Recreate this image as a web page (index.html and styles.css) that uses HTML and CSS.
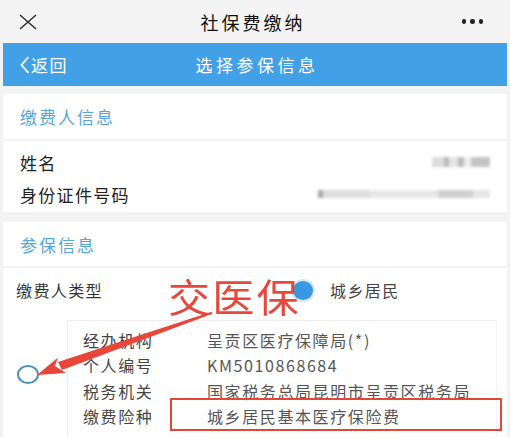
FILE: index.html
```html
<!DOCTYPE html>
<html lang="zh-CN">
<head>
<meta charset="utf-8">
<title>社保费缴纳</title>
<link rel="stylesheet" href="styles.css">
</head>
<body>
<div class="page">
  <header class="topbar">
    <svg class="icon-close" width="18" height="16" viewBox="0 0 18 16"><path d="M1 1 L17 15 M17 1 L1 15" stroke="#333" stroke-width="1.6" fill="none"/></svg>
    <div class="topbar-title">社保费缴纳</div>
    <div class="dots"><i></i><i></i><i></i></div>
  </header>

  <nav class="navbar">
    <div class="back"><svg width="10" height="18" viewBox="0 0 10 18"><path d="M8.5 1 L1.5 9 L8.5 17" stroke="#fff" stroke-width="1.8" fill="none"/></svg><span>返回</span></div>
    <div class="nav-title">选择参保信息</div>
    <div></div>
  </nav>

  <section class="sec-head">缴费人信息</section>
  <section class="card rows">
    <div class="row"><span>姓名</span><span class="blur blur-name"></span></div>
    <div class="row"><span>身份证件号码</span><span class="blur blur-id"></span></div>
  </section>

  <section class="sec-head sec-gap">参保信息</section>
  <section class="card detail">
    <div class="type-row">
      <span class="type-label">缴费人类型</span>
      <span class="radio-on"></span>
      <span class="type-val">城乡居民</span>
    </div>
    <div class="choice">
      <span class="radio-off"></span>
      <div class="infobox">
        <span class="k">经办机构</span><span class="v">呈贡区医疗保障局(*)</span>
        <span class="k">个人编号</span><span class="v">KM5010868684</span>
        <span class="k">税务机关</span><span class="v">国家税务总局昆明市呈贡区税务局</span>
        <span class="k">缴费险种</span><span class="v">城乡居民基本医疗保险费</span>
      </div>
    </div>
  </section>

  <div class="note">交医保</div>
  <div class="redbox"></div>
  <svg class="arrow" width="510" height="437" viewBox="0 0 510 437">
    <polygon points="212.4,313.8 211.6,311.8 58,362 62,370" fill="#e8463a"/>
    <polygon points="37,375 58,357.5 55,366 66,373" fill="#e8463a"/>
  </svg>
</div>
</body>
</html>
```

FILE: styles.css
```css
* { box-sizing: border-box; }
html, body { margin: 0; padding: 0; }
body {
  font-family: "Noto Sans CJK SC", "Noto Sans", sans-serif;
  background: #f3f3f3;
  width: 510px;
  height: 437px;
  overflow: hidden;
}
.page {
  position: relative;
  width: 510px;
  height: 437px;
  padding: 0 3px;
  overflow: hidden;
}
.topbar {
  height: 43px;
  display: grid;
  grid-template-columns: 1fr auto 1fr;
  align-items: center;
  padding: 0 24px 0 16px;
  background: #f4f4f4;
}
.icon-close { display: block; }
.topbar-title {
  font-size: 18px;
  font-weight: 400;
  letter-spacing: 3px;
  color: #111;
  margin-left: 4px;
}
.dots { display: flex; justify-content: flex-end; gap: 4px; }
.dots i { width: 4.5px; height: 4.5px; border-radius: 50%; background: #222; display: block; }

.navbar {
  height: 43px;
  background: #42a0e6;
  display: grid;
  grid-template-columns: 1fr auto 1fr;
  align-items: center;
  padding: 0 17px;
  color: #fff;
}
.back { display: flex; align-items: center; gap: 1px; font-size: 17px; letter-spacing: 1.5px; }
.back svg { display: block; }
.nav-title { font-size: 17px; letter-spacing: 3.5px; margin-left: 4px; }

.sec-head {
  margin-top: 8px;
  height: 45px;
  background: #fff;
  display: flex;
  align-items: center;
  padding-left: 17px;
  font-size: 17px;
  letter-spacing: 2px;
  color: #55a6dc;
  margin-bottom: 2px;
}
.sec-gap { margin-top: 10px; height: 44px; }
.card { background: #fff; }
.rows { padding: 5px 17px 2px 17px; }
.row {
  height: 32px;
  display: flex;
  justify-content: space-between;
  align-items: center;
  font-size: 17px;
  letter-spacing: 1.3px;
  color: #222;
}
.blur { display: block; filter: blur(1.8px); }
.blur-name {
  width: 58px; height: 10px;
  background: linear-gradient(90deg, #ddd 0 20%, #bbb 20% 30%, #e4e4e4 30% 45%, #bbb 45% 55%, #eee 55% 68%, #c4c4c4 68% 100%);
}
.blur-id {
  width: 172px; height: 8px;
  background: linear-gradient(90deg, #aaa 0 3%, #ddd 3% 30%, #e8e8e8 30% 70%, #cfcfcf 70% 90%, #e6e6e6 90% 100%);
}

.detail { height: 200px; padding: 10px 10px 0 13px; }
.type-row {
  height: 24px;
  display: flex;
  align-items: center;
  font-size: 16px;
  letter-spacing: 1.4px;
  color: #333;
}
.type-label { width: 277px; }
.radio-on {
  width: 20px; height: 19px;
  border-radius: 50%;
  background: #3a97e2;
  box-shadow: 0 0 0 2px #d6e7f6;
}
.type-val { margin-left: 17px; color: #444; }

.choice {
  margin-top: 18px;
  display: flex;
  align-items: center;
  padding-left: 1px;
}
.radio-off {
  width: 22px; height: 19px;
  border: 2px solid #4f91bb;
  border-radius: 50%;
  margin-top: -22px;
}
.infobox {
  margin-left: 28px;
  width: 430px;
  border: 1px solid #ececec;
  border-right-color: #f3f3f3;
  padding: 6px 0 20px 15px;
  display: grid;
  grid-template-columns: 124px 1fr;
  grid-auto-rows: 25.5px;
  align-items: center;
  font-size: 16px;
  letter-spacing: 1.6px;
}
.k { color: #444; }
.v { color: #555; }

.note {
  position: absolute;
  left: 168px;
  top: 269px;
  font-size: 39px;
  line-height: 52px;
  color: #e6483b;
  letter-spacing: 2px;
  transform: scaleX(1.08);
  transform-origin: left center;
}
.redbox {
  position: absolute;
  left: 170px;
  top: 398px;
  width: 332px;
  height: 33px;
  border: 2px solid #e0473a;
}
.arrow { position: absolute; left: 0; top: 0; pointer-events: none; }
```
